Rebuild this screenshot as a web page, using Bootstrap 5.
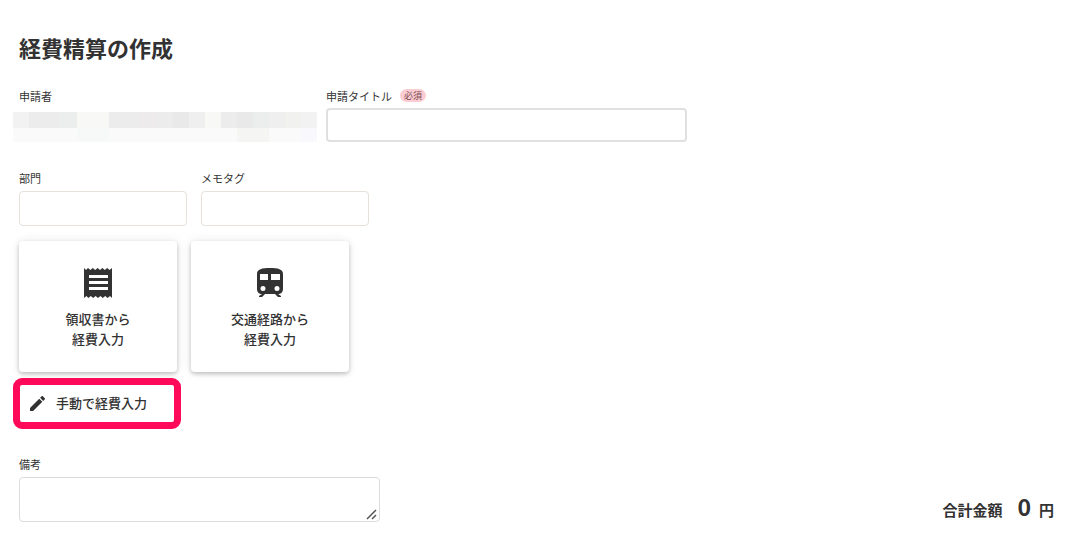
<!DOCTYPE html>
<html lang="ja">
<head>
<meta charset="utf-8">
<meta name="viewport" content="width=device-width, initial-scale=1">
<title>経費精算の作成</title>
<link rel="stylesheet" href="https://cdn.jsdelivr.net/npm/bootstrap@5.3.0/dist/css/bootstrap.min.css">
<style>
body { font-family: "Noto Sans CJK JP", sans-serif; color: #323232; background: #fff; }
main { padding: 31px 18px 19px 19px; }
h1 { font-size: 22px; line-height: 32px; font-weight: 700; margin: 0 0 25px; }
.field-label { font-size: 11px; line-height: 16px; }
.field-label.d-block { margin-bottom: 5px; }
.required-tag { font-size: 9px; line-height: 13px; padding: 0 4px; margin-top: 1px; background: #fbcdd3; color: #7b4a52; border-radius: 7px; }
.field-wide { width: 361px; max-width: 100%; }
.field-narrow { width: 168px; }
.applicant { width: 307px; }
.masked { display: block; width: 304px; height: 30px; margin: 8px 0 0 -6px; }
.entry-fields { gap: 14px; margin-top: 28px; }
.entry-cards { gap: 14px; margin-top: 15px; }
.form-control { border: 1px solid #e6e1da; border-radius: 4px; padding: 4px 8px; font-size: 13px; height: 35px; }
.form-control.title-input { border: 2px solid #e0e0e0; height: 34px; }
.form-control.note-input { border-color: #dcdcdc; height: 45px; min-height: 45px; resize: vertical; background: url("data:image/svg+xml,%3Csvg xmlns='http://www.w3.org/2000/svg' width='11' height='11'%3E%3Cpath d='M1 10 10 1M6 10l4-4' stroke='%23555' stroke-width='1.5'/%3E%3C/svg%3E") no-repeat right 2px bottom 1px; }
.note-input::-webkit-resizer { background: transparent; }
.entry-card { width: 158px; height: 131px; border: 0; border-radius: 4px; background: #fff; color: #323232; font-size: 13px; font-weight: 500; line-height: 20px; box-shadow: 0 2px 4px rgba(0,0,0,.22), 0 0 12px rgba(0,0,0,.08); padding: 2px 0 0; }
.entry-card svg { width: 32px; height: 32px; margin-bottom: 10px; }
.callout { border: 7px solid #ff0a5a; border-radius: 9px; width: 168px; height: 51px; margin: 6px 0 27px -6px; }
.manual-entry { font-size: 13px; font-weight: 500; color: #323232; border: 0; padding: 0 10px 1px; gap: 11px; line-height: 20px; }
.total { font-size: 15px; font-weight: 700; line-height: 24px; }
.total-value { font-size: 23px; margin: 0 8px 0 15px; }
</style>
</head>
<body>
<main>
  <h1>経費精算の作成</h1>
  <form>
    <div class="d-flex flex-wrap">
      <div class="applicant">
        <div class="field-label">申請者</div>
        <svg class="masked" viewBox="0 0 304 30" shape-rendering="crispEdges" role="img" aria-label="申請者名">
          <path fill="#fafafa" d="M0 0h304v30H0z"/>
          <path fill="#f2f2f2" d="M0 0h16v16H0zM288 0h16v16h-16z"/>
          <path fill="#ececec" d="M16 0h32v16H16zM96 0h32v16H96zM208 0h16v16h-16z"/>
          <path fill="#edecec" d="M32 0h16v16H32zM144 0h16v16h-16z"/>
          <path fill="#eceeee" d="M48 0h16v16H48zM240 0h16v16h-16z"/>
          <path fill="#f8f8f6" d="M64 0h32v16H64zM192 0h16v16h-16z"/>
          <path fill="#eeebec" d="M128 0h16v16h-16z"/>
          <path fill="#e9e9e9" d="M160 0h16v16h-16zM224 0h16v16h-16z"/>
          <path fill="#efeff0" d="M176 0h16v16h-16zM256 0h16v16h-16z"/>
          <path fill="#f1f1ef" d="M272 0h16v16h-16z"/>
          <path fill="#f7f9f8" d="M64 16h32v14H64z"/>
          <path fill="#f5f5f4" d="M224 16h32v14h-32z"/>
          <path fill="#f9f9fd" d="M288 16h16v14h-16z"/>
        </svg>
      </div>
      <div class="field-wide">
        <div class="d-flex gap-2 mb-1">
          <label class="field-label" for="title">申請タイトル</label>
          <span class="required-tag align-self-start">必須</span>
        </div>
        <input class="form-control title-input" id="title" type="text" required>
      </div>
    </div>

    <div class="d-flex flex-wrap entry-fields">
      <div class="field-narrow">
        <label class="field-label d-block" for="department">部門</label>
        <input class="form-control" id="department" type="text">
      </div>
      <div class="field-narrow">
        <label class="field-label d-block" for="memo">メモタグ</label>
        <input class="form-control" id="memo" type="text">
      </div>
    </div>

    <div class="d-flex flex-wrap entry-cards">
      <button class="entry-card" type="button">
        <svg viewBox="0 0 32 32" fill="#323232" aria-hidden="true"><path fill-rule="evenodd" d="M2 1l2 2 2-2 2.400 2 2.400-2 2.400 2 2.400-2 2.400 2 2.400-2 2.400 2 2.400-2 2.400 2L30 1v30l-2-2-2.400 2-2.400-2-2.400 2-2.400-2-2.400 2-2.400-2-2.400 2-2.400-2-2.400 2-2-2L2 31zM7 8v3h19V8zM7 14v3h19v-3zM7 20v3h19v-3z"/></svg>
        <span class="d-block">領収書から<br>経費入力</span>
      </button>
      <button class="entry-card" type="button">
        <svg viewBox="0 0 32 32" fill="#323232" aria-hidden="true"><path fill-rule="evenodd" d="M3 7C3 2 8 1 16 1s13 1 13 6v15c0 3-2 5-5 5l3 2v1h-3l-3-3H11l-3 3H5v-1l3-2c-3 0-5-2-5-5zM6 7v6h8V7zM17 7v6h9V7zM9 19a2.500 2.500 0 1 0 0 5 2.500 2.500 0 0 0 0-5zM23 19a2.500 2.500 0 1 0 0 5 2.500 2.500 0 0 0 0-5z"/></svg>
        <span class="d-block">交通経路から<br>経費入力</span>
      </button>
    </div>

    <div class="callout d-flex">
      <button class="btn manual-entry d-flex align-items-center w-100" type="button">
        <svg width="15" height="15" viewBox="3 3 18 18" fill="#323232" aria-hidden="true"><path d="M3 17.250V21h3.750L17.810 9.940l-3.750-3.750zM20.710 7.040a1 1 0 0 0 0-1.410l-2.340-2.340a1 1 0 0 0-1.410 0l-1.830 1.830 3.750 3.750z"/></svg>
        手動で経費入力
      </button>
    </div>

    <div class="d-flex flex-wrap justify-content-between align-items-end">
      <div class="field-wide">
        <label class="field-label d-block" for="note">備考</label>
        <textarea class="form-control note-input" id="note" rows="1"></textarea>
      </div>
      <div class="total d-flex align-items-baseline">
        <span>合計金額</span><span class="total-value">0</span><span>円</span>
      </div>
    </div>
  </form>
</main>
<script src="https://cdn.jsdelivr.net/npm/bootstrap@5.3.0/dist/js/bootstrap.bundle.min.js"></script>
</body>
</html>
